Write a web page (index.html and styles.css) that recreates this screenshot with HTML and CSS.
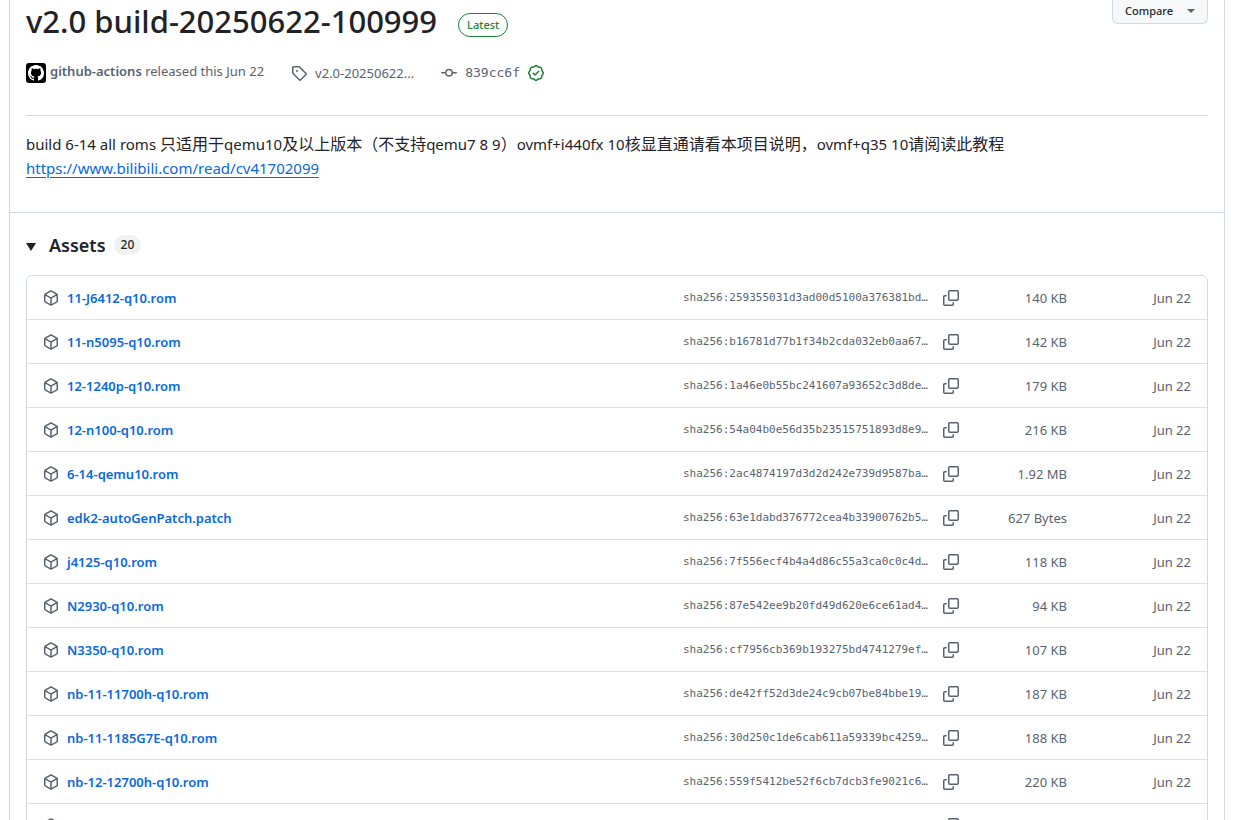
FILE: index.html
```html
<!DOCTYPE html>
<html lang="en">
<head>
<meta charset="utf-8">
<title>Release v2.0 build-20250622-100999</title>
<link rel="stylesheet" href="styles.css">
</head>
<body>
<svg class="sprite" aria-hidden="true">
  <symbol id="package" viewBox="0 0 16 16"><path fill-rule="evenodd" d="M8.878.392a1.75 1.75 0 0 0-1.756 0l-5.25 3.045A1.75 1.75 0 0 0 1 4.951v6.098c0 .624.332 1.2.872 1.514l5.25 3.045a1.75 1.75 0 0 0 1.756 0l5.25-3.045c.54-.313.872-.89.872-1.514V4.951c0-.624-.332-1.2-.872-1.514L8.878.392ZM7.875 1.69a.25.25 0 0 1 .25 0l4.63 2.685L8 7.133 3.245 4.375l4.63-2.685ZM2.5 5.677v5.372c0 .09.047.171.125.216l4.625 2.683V8.432Zm6.25 8.271 4.625-2.683a.25.25 0 0 0 .125-.216V5.677L8.75 8.432Z"/></symbol>
  <symbol id="copy" viewBox="0 0 16 16"><path d="M0 6.75C0 5.784.784 5 1.75 5h1.5a.75.75 0 0 1 0 1.5h-1.5a.25.25 0 0 0-.25.25v7.5c0 .138.112.25.25.25h7.5a.25.25 0 0 0 .25-.25v-1.5a.75.75 0 0 1 1.5 0v1.5A1.75 1.75 0 0 1 9.25 16h-7.5A1.75 1.75 0 0 1 0 14.25Z"/><path d="M5 1.75C5 .784 5.784 0 6.75 0h7.5C15.216 0 16 .784 16 1.75v7.5A1.75 1.75 0 0 1 14.25 11h-7.5A1.75 1.75 0 0 1 5 9.25Zm1.75-.25a.25.25 0 0 0-.25.25v7.5c0 .138.112.25.25.25h7.5a.25.25 0 0 0 .25-.25v-7.5a.25.25 0 0 0-.25-.25Z"/></symbol>
</svg>
<main class="release">
  <header class="release-header">
    <div class="title-row">
      <h1 class="title">v2.0 build-20250622-100999</h1>
      <a class="latest" href="#latest">Latest</a>
      <button class="compare" type="button">Compare <span class="caret"></span></button>
    </div>
    <div class="meta">
      <div class="author">
        <svg class="avatar" viewBox="0 0 20 20" aria-hidden="true"><rect width="20" height="20" rx="3"/><path fill="#fff" transform="translate(2 2)" d="M8 0C3.58 0 0 3.58 0 8c0 3.54 2.29 6.53 5.47 7.59.4.07.55-.17.55-.38 0-.19-.01-.82-.01-1.49-2.01.37-2.53-.49-2.69-.94-.09-.23-.48-.94-.82-1.13-.28-.15-.68-.52-.01-.53.63-.01 1.08.58 1.23.82.72 1.21 1.87.87 2.33.66.07-.52.28-.87.51-1.07-1.78-.2-3.64-.89-3.64-3.95 0-.87.31-1.59.82-2.15-.08-.2-.36-1.02.08-2.12 0 0 .67-.21 2.2.82.64-.18 1.32-.27 2-.27.68 0 1.36.09 2 .27 1.53-1.04 2.2-.82 2.2-.82.44 1.1.16 1.92.08 2.12.51.56.82 1.27.82 2.15 0 3.07-1.87 3.75-3.65 3.95.29.25.54.73.54 1.48 0 1.07-.01 1.93-.01 2.2 0 .21.15.46.55.38A8.013 8.013 0 0 0 16 8c0-4.42-3.58-8-8-8z"/></svg>
        <span class="byline"><a class="author-name" href="#author">github-actions</a> released this Jun 22</span>
      </div>
      <a class="ref" href="#tag"><svg class="icon" viewBox="0 0 16 16" aria-hidden="true"><path d="M1 7.775V2.75C1 1.784 1.784 1 2.75 1h5.025c.464 0 .91.184 1.238.513l6.25 6.25a1.75 1.75 0 0 1 0 2.474l-5.026 5.026a1.75 1.75 0 0 1-2.474 0l-6.25-6.25A1.752 1.752 0 0 1 1 7.775Zm1.5 0c0 .066.026.13.073.177l6.25 6.25a.25.25 0 0 0 .354 0l5.025-5.025a.25.25 0 0 0 0-.354l-6.25-6.25a.25.25 0 0 0-.177-.073H2.75a.25.25 0 0 0-.25.25ZM6 5a1 1 0 1 1 0 2 1 1 0 0 1 0-2Z"/></svg><span>v2.0-20250622...</span></a>
      <div class="commit">
        <a class="ref" href="#commit"><svg class="icon" viewBox="0 0 16 16" aria-hidden="true"><path d="M11.93 8.5a4.002 4.002 0 0 1-7.86 0H.75a.75.75 0 0 1 0-1.5h3.32a4.002 4.002 0 0 1 7.86 0h3.32a.75.75 0 0 1 0 1.5Zm-1.43-.75a2.5 2.5 0 1 0-5 0 2.5 2.5 0 0 0 5 0Z"/></svg><code class="sha">839cc6f</code></a>
        <svg class="icon verified" viewBox="0 0 16 16" aria-hidden="true"><path d="m9.585.52.929.68c.153.112.331.186.518.215l1.138.175a2.678 2.678 0 0 1 2.24 2.24l.174 1.139c.029.187.103.365.215.518l.68.928a2.677 2.677 0 0 1 0 3.17l-.68.928a1.174 1.174 0 0 0-.215.518l-.175 1.138a2.678 2.678 0 0 1-2.241 2.241l-1.138.175a1.17 1.17 0 0 0-.518.215l-.928.68a2.677 2.677 0 0 1-3.17 0l-.928-.68a1.174 1.174 0 0 0-.518-.215L3.83 14.41a2.678 2.678 0 0 1-2.24-2.24l-.175-1.138a1.17 1.17 0 0 0-.215-.518l-.68-.928a2.677 2.677 0 0 1 0-3.17l.68-.928c.112-.153.186-.331.215-.518l.175-1.14a2.678 2.678 0 0 1 2.24-2.24l1.139-.175c.187-.029.365-.103.518-.215l.928-.68a2.677 2.677 0 0 1 3.17 0ZM7.303 1.728l-.927.68a2.67 2.67 0 0 1-1.18.489l-1.137.174a1.179 1.179 0 0 0-.987.987l-.174 1.136a2.677 2.677 0 0 1-.489 1.18l-.68.928a1.18 1.18 0 0 0 0 1.394l.68.927c.256.348.424.753.489 1.18l.174 1.137c.078.509.478.909.987.987l1.136.174a2.67 2.67 0 0 1 1.18.489l.928.68c.414.305.979.305 1.394 0l.927-.68a2.67 2.67 0 0 1 1.18-.489l1.137-.174a1.18 1.18 0 0 0 .987-.987l.174-1.136a2.67 2.67 0 0 1 .489-1.18l.68-.928a1.176 1.176 0 0 0 0-1.394l-.68-.927a2.686 2.686 0 0 1-.489-1.18l-.174-1.137a1.179 1.179 0 0 0-.987-.987l-1.136-.174a2.677 2.677 0 0 1-1.18-.489l-.928-.68a1.176 1.176 0 0 0-1.394 0ZM11.28 6.78l-3.75 3.75a.75.75 0 0 1-1.06 0L4.72 8.78a.751.751 0 0 1 .018-1.042.751.751 0 0 1 1.042-.018L7 8.94l3.22-3.22a.751.751 0 0 1 1.042.018.751.751 0 0 1 .018 1.042Z"/></svg>
      </div>
    </div>
  </header>
  <p class="notes">build 6-14 all roms <span class="zh" lang="zh">只适用于</span>qemu10<span class="zh" lang="zh">及以上版本（不支持</span>qemu7 8 9<span class="zh" lang="zh">）</span>ovmf+i440fx 10<span class="zh" lang="zh">核显直通请看本项目说明，</span>ovmf+q35 10<span class="zh" lang="zh">请阅读此教程</span><br><a class="notes-link" href="#read">https://www.bilibili.com/read/cv41702099</a></p>
  <section class="assets">
    <h2 class="assets-title"><span class="disclosure"></span>Assets <span class="counter">20</span></h2>
    <ul class="asset-list">
      <li class="asset"><svg class="icon"><use href="#package"/></svg><a class="name" href="#a1">11-J6412-q10.rom</a><code class="digest">sha256:259355031d3ad00d5100a376381bd…</code><button class="copy" type="button" aria-label="Copy"><svg class="icon"><use href="#copy"/></svg></button><span class="size">140 KB</span><time class="date">Jun 22</time></li>
      <li class="asset"><svg class="icon"><use href="#package"/></svg><a class="name" href="#a2">11-n5095-q10.rom</a><code class="digest">sha256:b16781d77b1f34b2cda032eb0aa67…</code><button class="copy" type="button" aria-label="Copy"><svg class="icon"><use href="#copy"/></svg></button><span class="size">142 KB</span><time class="date">Jun 22</time></li>
      <li class="asset"><svg class="icon"><use href="#package"/></svg><a class="name" href="#a3">12-1240p-q10.rom</a><code class="digest">sha256:1a46e0b55bc241607a93652c3d8de…</code><button class="copy" type="button" aria-label="Copy"><svg class="icon"><use href="#copy"/></svg></button><span class="size">179 KB</span><time class="date">Jun 22</time></li>
      <li class="asset"><svg class="icon"><use href="#package"/></svg><a class="name" href="#a4">12-n100-q10.rom</a><code class="digest">sha256:54a04b0e56d35b23515751893d8e9…</code><button class="copy" type="button" aria-label="Copy"><svg class="icon"><use href="#copy"/></svg></button><span class="size">216 KB</span><time class="date">Jun 22</time></li>
      <li class="asset"><svg class="icon"><use href="#package"/></svg><a class="name" href="#a5">6-14-qemu10.rom</a><code class="digest">sha256:2ac4874197d3d2d242e739d9587ba…</code><button class="copy" type="button" aria-label="Copy"><svg class="icon"><use href="#copy"/></svg></button><span class="size">1.92 MB</span><time class="date">Jun 22</time></li>
      <li class="asset"><svg class="icon"><use href="#package"/></svg><a class="name" href="#a6">edk2-autoGenPatch.patch</a><code class="digest">sha256:63e1dabd376772cea4b33900762b5…</code><button class="copy" type="button" aria-label="Copy"><svg class="icon"><use href="#copy"/></svg></button><span class="size">627 Bytes</span><time class="date">Jun 22</time></li>
      <li class="asset"><svg class="icon"><use href="#package"/></svg><a class="name" href="#a7">j4125-q10.rom</a><code class="digest">sha256:7f556ecf4b4a4d86c55a3ca0c0c4d…</code><button class="copy" type="button" aria-label="Copy"><svg class="icon"><use href="#copy"/></svg></button><span class="size">118 KB</span><time class="date">Jun 22</time></li>
      <li class="asset"><svg class="icon"><use href="#package"/></svg><a class="name" href="#a8">N2930-q10.rom</a><code class="digest">sha256:87e542ee9b20fd49d620e6ce61ad4…</code><button class="copy" type="button" aria-label="Copy"><svg class="icon"><use href="#copy"/></svg></button><span class="size">94 KB</span><time class="date">Jun 22</time></li>
      <li class="asset"><svg class="icon"><use href="#package"/></svg><a class="name" href="#a9">N3350-q10.rom</a><code class="digest">sha256:cf7956cb369b193275bd4741279ef…</code><button class="copy" type="button" aria-label="Copy"><svg class="icon"><use href="#copy"/></svg></button><span class="size">107 KB</span><time class="date">Jun 22</time></li>
      <li class="asset"><svg class="icon"><use href="#package"/></svg><a class="name" href="#a10">nb-11-11700h-q10.rom</a><code class="digest">sha256:de42ff52d3de24c9cb07be84bbe19…</code><button class="copy" type="button" aria-label="Copy"><svg class="icon"><use href="#copy"/></svg></button><span class="size">187 KB</span><time class="date">Jun 22</time></li>
      <li class="asset"><svg class="icon"><use href="#package"/></svg><a class="name" href="#a11">nb-11-1185G7E-q10.rom</a><code class="digest">sha256:30d250c1de6cab611a59339bc4259…</code><button class="copy" type="button" aria-label="Copy"><svg class="icon"><use href="#copy"/></svg></button><span class="size">188 KB</span><time class="date">Jun 22</time></li>
      <li class="asset"><svg class="icon"><use href="#package"/></svg><a class="name" href="#a12">nb-12-12700h-q10.rom</a><code class="digest">sha256:559f5412be52f6cb7dcb3fe9021c6…</code><button class="copy" type="button" aria-label="Copy"><svg class="icon"><use href="#copy"/></svg></button><span class="size">220 KB</span><time class="date">Jun 22</time></li>
      <li class="asset"><svg class="icon"><use href="#package"/></svg><span class="name"></span><span class="digest"></span><button class="copy" type="button" aria-label="Copy"><svg class="icon"><use href="#copy"/></svg></button><span class="size"></span><span class="date"></span></li>
    </ul>
  </section>
</main>
</body>
</html>
```
FILE: styles.css
```css
* { box-sizing: border-box; }

body {
  margin: 0;
  height: 100vh;
  overflow: hidden;
  background: #fff;
  color: #1f2328;
  font: 13px/20px "Noto Sans", "Noto Sans CJK SC", sans-serif;
}

a { color: inherit; text-decoration: none; }
button { font: inherit; cursor: pointer; }

.sprite { display: none; }

.icon {
  flex: none;
  display: block;
  width: 16px;
  height: 16px;
  fill: #59636e;
}

.release {
  margin: 0 15px 0 9px;
  border: 1px solid #d1d9e0;
  border-width: 0 1px;
}

.release-header {
  margin: 0 16px;
  padding-bottom: 32px;
  border-bottom: 1px solid #d1d9e0;
}

.title-row {
  display: flex;
  align-items: flex-start;
}

.title {
  margin: 0;
  font-size: 31px;
  line-height: 42px;
  font-weight: 500;
}

.latest {
  margin: 13px 0 0 21px;
  padding: 0 8px;
  border: 1px solid #1a7f37;
  border-radius: 12px;
  color: #1a7f37;
  font-size: 11px;
  font-weight: 500;
  line-height: 22px;
}

.compare {
  display: flex;
  align-items: center;
  gap: 14px;
  margin-left: auto;
  height: 24px;
  padding: 0 12px 2px;
  border: 1px solid #d1d9e0;
  border-top: 0;
  border-radius: 0 0 6px 6px;
  background: #f6f8fa;
  color: #25292e;
  font-size: 11px;
  font-weight: 500;
}

.caret {
  border: 4px solid transparent;
  border-top-color: #59636e;
  border-bottom: 0;
}

.meta {
  display: flex;
  align-items: center;
  gap: 27px;
  margin-top: 21px;
  color: #59636e;
}

.author { display: flex; align-items: flex-start; gap: 4px; margin-top: -2px; }
.avatar { width: 20px; height: 20px; margin-top: 2px; }
.author-name { font-weight: 600; }
.ref { display: flex; align-items: center; gap: 8px; }
.commit { display: flex; align-items: center; gap: 8px; }
.sha { font: 13px/20px "DejaVu Sans Mono", monospace; }
.verified { fill: #1a7f37; }

.notes {
  margin: 0;
  padding: 16px 16px 32px;
  border-bottom: 1px solid #d1d9e0;
  font-size: 15px;
  line-height: 24px;
}

.zh {
  font-size: 16px;
  line-height: 20px;
}

.notes-link {
  color: #0969da;
  text-decoration: underline;
  text-underline-offset: 3px;
}

.assets { padding: 16px 16px 0; }

.assets-title {
  display: flex;
  align-items: center;
  margin: 0 0 14px;
  font-size: 18px;
  line-height: 32px;
  font-weight: 600;
}

.disclosure {
  margin: 3px 13px 0 0;
  border: 5px solid transparent;
  border-top: 8px solid #1f2328;
  border-bottom: 0;
}

.counter {
  margin-left: 8px;
  padding: 0 7px;
  border-radius: 10px;
  background: #eff1f3;
  font-size: 12px;
  line-height: 20px;
  font-weight: 500;
}

.asset-list {
  margin: 0;
  padding: 0;
  list-style: none;
  border: 1px solid #d1d9e0;
  border-radius: 6px;
}

.asset {
  display: grid;
  grid-template-columns: 16px 1fr auto 16px 108px 124px;
  align-items: center;
  padding: 12px 16px 11px;
  color: #59636e;
}

.asset + .asset { border-top: 1px solid #dde2e7; }

.name {
  justify-self: start;
  margin-left: 8px;
  min-height: 20px;
  color: #0969da;
  font-weight: 600;
}

.digest {
  margin-right: 15px;
  font: 11px/20px "DejaVu Sans Mono", monospace;
}

.copy { padding: 0; border: 0; background: none; }
.size, .date { text-align: right; }
```
